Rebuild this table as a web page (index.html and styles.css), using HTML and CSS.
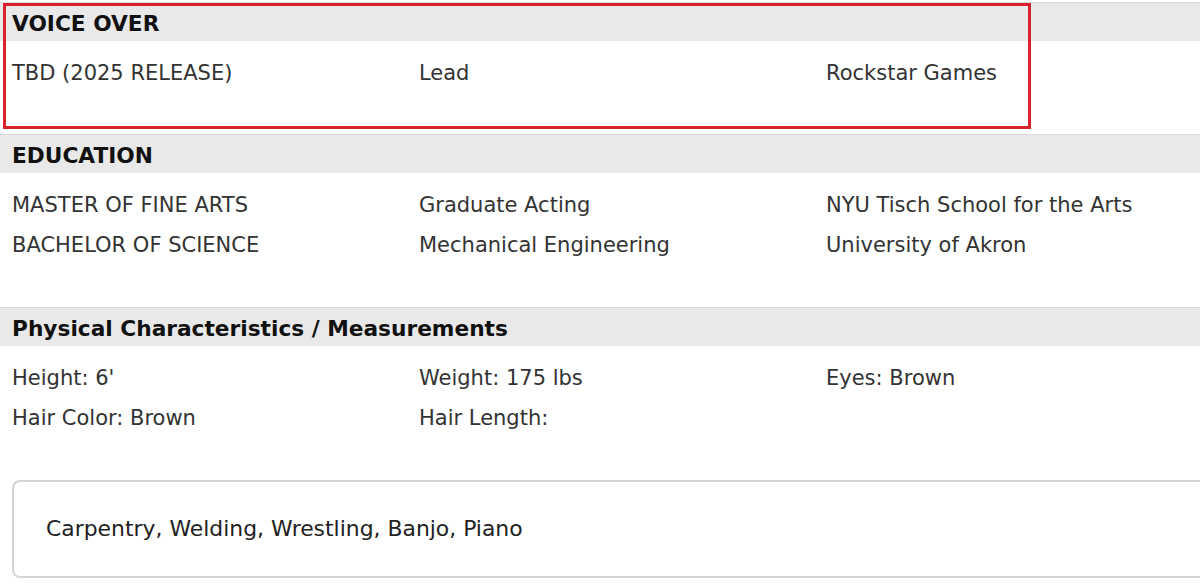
FILE: index.html
```html
<!DOCTYPE html>
<html>
<head>
<meta charset="utf-8">
<link rel="stylesheet" href="styles.css">
</head>
<body>
<div class="page">
  <section class="section">
    <h2 class="band">VOICE OVER</h2>
    <div class="rows">
      <div class="cell">TBD (2025 RELEASE)</div>
      <div class="cell">Lead</div>
      <div class="cell">Rockstar Games</div>
    </div>
    <div class="highlight"></div>
  </section>
  <section class="section">
    <h2 class="band">EDUCATION</h2>
    <div class="rows">
      <div class="cell">MASTER OF FINE ARTS</div>
      <div class="cell">Graduate Acting</div>
      <div class="cell">NYU Tisch School for the Arts</div>
      <div class="cell">BACHELOR OF SCIENCE</div>
      <div class="cell">Mechanical Engineering</div>
      <div class="cell">University of Akron</div>
    </div>
  </section>
  <section class="section">
    <h2 class="band">Physical Characteristics / Measurements</h2>
    <div class="rows">
      <div class="cell">Height: 6'</div>
      <div class="cell">Weight: 175 lbs</div>
      <div class="cell">Eyes: Brown</div>
      <div class="cell">Hair Color: Brown</div>
      <div class="cell">Hair Length:</div>
      <div class="cell"></div>
    </div>
  </section>
  <div class="skills">Carpentry, Welding, Wrestling, Banjo, Piano</div>
</div>
</body>
</html>
```
FILE: styles.css
```css
html, body {
  margin: 0;
  padding: 0;
  background: #fff;
  overflow: hidden;
}
body {
  font-family: "DejaVu Sans", Verdana, sans-serif;
  color: #333;
}
.page {
  padding-top: 2px;
  width: 1240px;
}
.section {
  position: relative;
  border-top: 1px solid #d9d9d9;
  padding-bottom: 42px;
}
.section:first-child {
  padding-bottom: 41px;
}
.band {
  margin: 0;
  height: 35px;
  padding-top: 3px;
  line-height: 35px;
  background: #e9e9e9;
  padding-left: 12px;
  font-size: 21.7px;
  font-weight: bold;
  color: #111;
}
.rows {
  display: grid;
  grid-template-columns: 407px 407px 407px;
  grid-auto-rows: 40px;
  padding: 12px 0 0 12px;
}
.cell {
  font-size: 21px;
  line-height: 40px;
  white-space: nowrap;
}
.highlight {
  position: absolute;
  left: 3px;
  top: 0;
  width: 1022px;
  height: 120px;
  border: 3px solid #d8232d;
}
.skills {
  margin-left: 12px;
  height: 94px;
  border: 2px solid #d4d4d4;
  border-radius: 8px;
  padding-left: 32px;
  line-height: 94px;
  font-size: 21.9px;
  color: #222;
}
```
